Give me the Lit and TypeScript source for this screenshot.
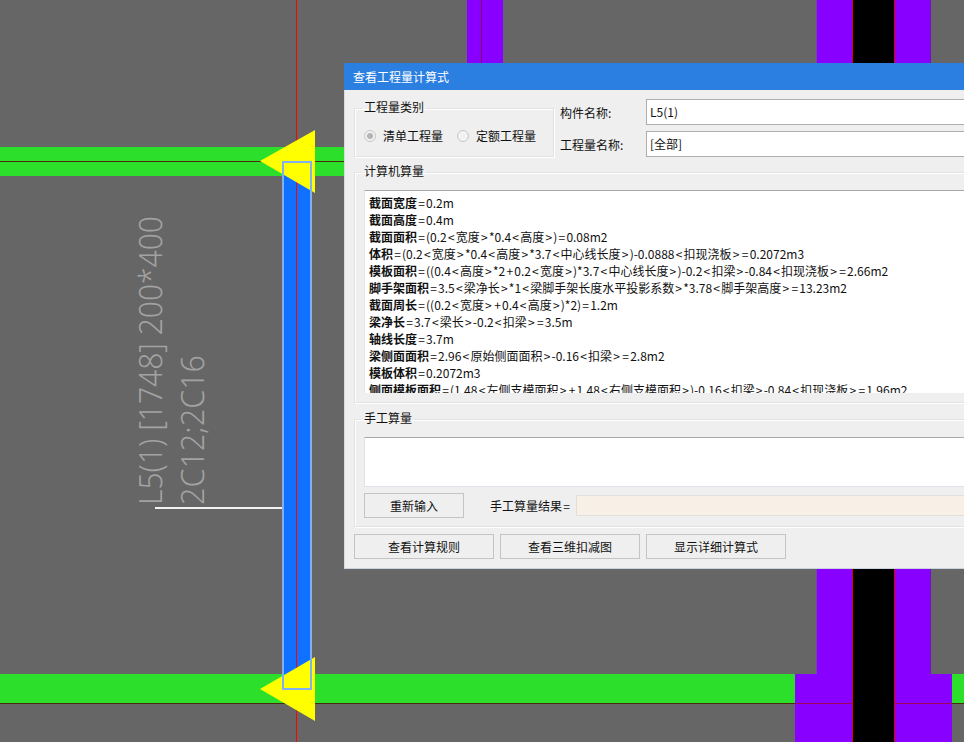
import { LitElement, html, css } from "lit";
import { customElement } from "lit/decorators.js";

const LINES: [string, string][] = [
  ["截面宽度", "=0.2m"],
  ["截面高度", "=0.4m"],
  ["截面面积", "=(0.2<宽度>*0.4<高度>)=0.08m2"],
  ["体积", "=(0.2<宽度>*0.4<高度>*3.7<中心线长度>)-0.0888<扣现浇板>=0.2072m3"],
  ["模板面积", "=((0.4<高度>*2+0.2<宽度>)*3.7<中心线长度>)-0.2<扣梁>-0.84<扣现浇板>=2.66m2"],
  ["脚手架面积", "=3.5<梁净长>*1<梁脚手架长度水平投影系数>*3.78<脚手架高度>=13.23m2"],
  ["截面周长", "=((0.2<宽度>+0.4<高度>)*2)=1.2m"],
  ["梁净长", "=3.7<梁长>-0.2<扣梁>=3.5m"],
  ["轴线长度", "=3.7m"],
  ["梁侧面面积", "=2.96<原始侧面面积>-0.16<扣梁>=2.8m2"],
  ["模板体积", "=0.2072m3"],
  ["侧面模板面积", "=(1.48<左侧支模面积>+1.48<右侧支模面积>)-0.16<扣梁>-0.84<扣现浇板>=1.96m2"],
];

/* Splits a formula so that = < > + get the wider advance they have in the reference. */
const spaced = (s: string) =>
  s.split(/([=<>+])/).map((part) =>
    /^[=<>+]$/.test(part) ? html`<span class="sym">${part}</span>` : part
  );

@customElement("app-root")
export class AppRoot extends LitElement {
  static styles = css`
    :host {
      display: block;
      position: relative;
      width: 964px;
      height: 742px;
      overflow: hidden;
      background: #666666;
      font-family: "Noto Sans CJK SC", "Noto Sans", sans-serif;
      font-size: 12px;
      color: #111;
    }
    .canvas {
      position: absolute;
      left: 0;
      top: 0;
      display: block;
    }
    .cad-text {
      font-family: "Noto Sans", "Open Sans", sans-serif;
      font-size: 32px;
      font-weight: 300;
      fill: #a2a2a2;
    }
    .dialog {
      position: absolute;
      left: 344px;
      top: 63px;
      width: 660px;
      height: 506px;
      box-sizing: border-box;
      display: flex;
      flex-direction: column;
      background: #efefef;
      border-left: 1px solid #d6dce6;
      border-bottom: 1px solid #c9d3e0;
    }
    .title {
      height: 27px;
      flex: none;
      margin-left: -1px;
      padding-left: 9px;
      display: flex;
      align-items: center;
      background: #2b7fe0;
      color: #fff;
      line-height: 27px;
    }
    .body {
      flex: 1;
      display: flex;
      flex-direction: column;
      padding: 9px 10px 0 9px;
    }
    fieldset {
      margin: 0;
      min-width: 0;
      padding: 0 8px 0 9px;
      border: 1px solid #e2e2e2;
      box-shadow: inset 1px 1px 0 #fff, 1px 1px 0 #fff;
    }
    legend {
      padding: 0 2px;
      margin-left: -2px;
      line-height: 13px;
      height: 17px;
    }
    .top {
      display: flex;
      height: 59px;
      flex: none;
    }
    .kind {
      width: 200px;
      box-sizing: border-box;
      margin-top: 1px;
      height: 57px;
    }
    .radios {
      display: flex;
      align-items: center;
      height: 37px;
    }
    .radio {
      width: 12px;
      height: 12px;
      box-sizing: border-box;
      border: 1px solid #c6c6c6;
      border-radius: 50%;
      background: #f2f2f2;
      display: flex;
      align-items: center;
      justify-content: center;
      margin-right: 7px;
    }
    .radio.second {
      margin-left: 14px;
    }
    .dot {
      width: 6px;
      height: 6px;
      border-radius: 50%;
      background: #b4b4b4;
    }
    .names {
      flex: 1;
      margin-left: 6px;
      display: flex;
      flex-direction: column;
      gap: 6px;
    }
    .name-row {
      display: flex;
      align-items: center;
      height: 26px;
    }
    .name-row label {
      width: 86px;
      flex: none;
    }
    .input {
      flex: 1;
      height: 26px;
      box-sizing: border-box;
      border: 1px solid #adadad;
      background: #fff;
      padding-left: 3px;
      line-height: 24px;
    }
    .calc {
      flex: none;
      margin-top: 6px;
      padding-top: 9px;
      padding-bottom: 9px;
    }
    .calc-text {
      height: 203px;
      box-sizing: border-box;
      overflow: hidden;
      background: #fff;
      border-top: 1px solid #a6a6ac;
      border-left: 1px solid #e2e6ee;
      padding: 3px 0 0 4px;
    }
    .line {
      height: 17px;
      line-height: 17px;
      white-space: pre;
    }
    .line b {
      font-weight: 700;
    }
    .sym {
      padding: 0 1.2px;
    }
    .manual {
      flex: none;
      margin-top: 8px;
      padding-top: 9px;
      padding-bottom: 8px;
    }
    .manual-text {
      height: 50px;
      box-sizing: border-box;
      background: #fff;
      border: 1px solid #e0e3ea;
      border-top-color: #a8a8a8;
    }
    .manual-row {
      display: flex;
      align-items: center;
      margin-top: 6px;
      height: 25px;
    }
    .btn {
      height: 25px;
      box-sizing: border-box;
      border: 1px solid #c4c4c4;
      display: flex;
      align-items: center;
      justify-content: center;
      flex: none;
    }
    .btn.small {
      width: 100px;
    }
    .btn.wide {
      width: 140px;
    }
    .result-label {
      margin-left: 26px;
      width: 86px;
      flex: none;
    }
    .result {
      flex: 1;
      height: 21px;
      box-sizing: border-box;
      background: #f8efe6;
      border: 1px solid #e2e0dc;
    }
    .actions {
      display: flex;
      gap: 6px;
      margin-top: 7px;
    }
  `;

  private canvas() {
    return html`<svg class="canvas" width="964" height="742" viewBox="0 0 964 742" shape-rendering="crispEdges">
      <rect x="0" y="147" width="964" height="29" fill="#2bdf2b" />
      <rect x="0" y="161" width="964" height="1" fill="#4a2a08" />
      <rect x="0" y="674" width="964" height="29" fill="#2bdf2b" />
      <rect x="0" y="703" width="964" height="1" fill="#4a2a08" />

      <rect x="467" y="0" width="36" height="64" fill="#8800ff" />
      <rect x="481" y="0" width="1" height="64" fill="#90006a" />

      <rect x="817" y="0" width="113" height="742" fill="#8800ff" />
      <rect x="816" y="0" width="1" height="674" fill="#7048a0" />
      <rect x="930" y="0" width="1" height="674" fill="#7010c8" />
      <rect x="795" y="674" width="157" height="68" fill="#8800ff" />
      <rect x="795" y="703" width="157" height="1" fill="#a00060" />
      <rect x="852" y="0" width="43" height="742" fill="#000" />
      <rect x="852" y="0" width="1" height="742" fill="#e00000" />
      <rect x="894" y="0" width="1" height="742" fill="#e00000" />

      <rect x="283" y="162" width="28" height="527" fill="#1070ff" />
      <rect x="296" y="0" width="1" height="742" fill="#ff0000" />
      <polygon points="260,161 315,130 315,193" fill="#ffff00" shape-rendering="auto" />
      <polygon points="260,689 315,657 315,721" fill="#ffff00" shape-rendering="auto" />
      <rect x="282.5" y="161.5" width="28.5" height="527" fill="none" stroke="#80b0f0" stroke-width="2" />

      <rect x="155" y="507" width="127" height="2" fill="#f2f2f2" />
      <text class="cad-text" transform="translate(162 505) rotate(-90)" text-rendering="geometricPrecision" textLength="289" lengthAdjust="spacingAndGlyphs">L5(1) [1748] 200*400</text>
      <text class="cad-text" transform="translate(204 505) rotate(-90)" text-rendering="geometricPrecision" textLength="150" lengthAdjust="spacingAndGlyphs">2C12;2C16</text>
    </svg>`;
  }

  render() {
    return html`
      ${this.canvas()}
      <div class="dialog">
        <div class="title">查看工程量计算式</div>
        <div class="body">
          <div class="top">
            <fieldset class="kind">
              <legend>工程量类别</legend>
              <div class="radios">
                <span class="radio"><span class="dot"></span></span>
                <span>清单工程量</span>
                <span class="radio second"></span>
                <span>定额工程量</span>
              </div>
            </fieldset>
            <div class="names">
              <div class="name-row">
                <label>构件名称:</label>
                <div class="input">L5(1)</div>
              </div>
              <div class="name-row">
                <label>工程量名称:</label>
                <div class="input">[全部]</div>
              </div>
            </div>
          </div>
          <fieldset class="calc">
            <legend>计算机算量</legend>
            <div class="calc-text">
              ${LINES.map(([k, v]) => html`<div class="line"><b>${k}</b>${spaced(v)}</div>`)}
            </div>
          </fieldset>
          <fieldset class="manual">
            <legend>手工算量</legend>
            <div class="manual-text"></div>
            <div class="manual-row">
              <div class="btn small">重新输入</div>
              <div class="result-label">手工算量结果<span class="sym">=</span></div>
              <div class="result"></div>
            </div>
          </fieldset>
          <div class="actions">
            <div class="btn wide">查看计算规则</div>
            <div class="btn wide">查看三维扣减图</div>
            <div class="btn wide">显示详细计算式</div>
          </div>
        </div>
      </div>
    `;
  }
}
